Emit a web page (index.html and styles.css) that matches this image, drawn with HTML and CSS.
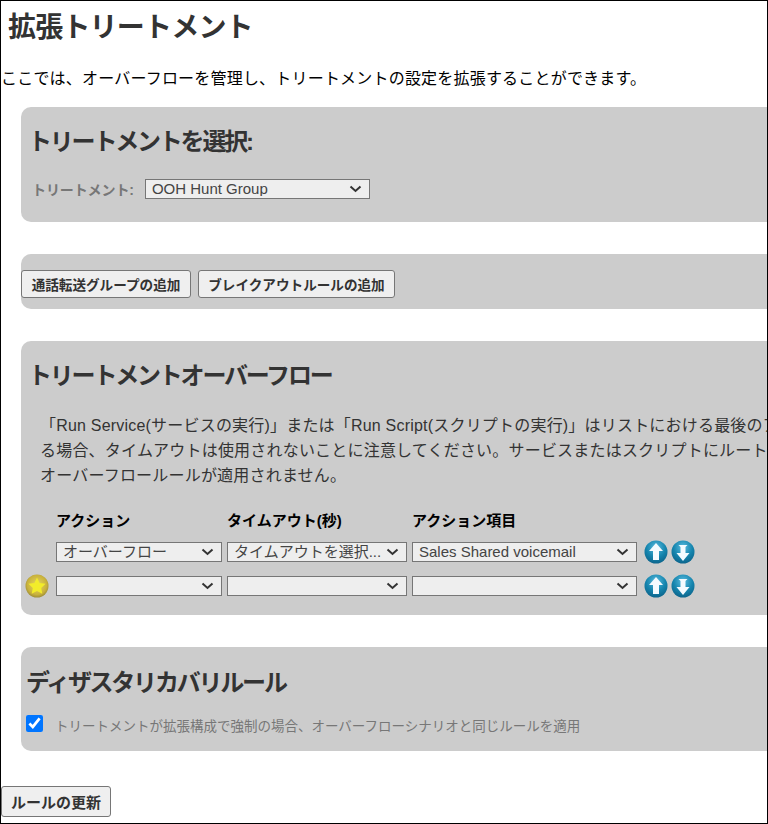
FILE: index.html
```html
<!DOCTYPE html>
<html lang="ja">
<head>
    <meta charset="UTF-8">
    <meta name="viewport" content="width=device-width, initial-scale=1.0">
    <title>拡張トリートメント</title>
    <link rel="stylesheet" href="styles.css">
</head>
<body>
    <svg class="icon-defs" width="0" height="0" aria-hidden="true">
        <defs>
            <radialGradient id="blueBall" cx="50%" cy="30%" r="75%">
                <stop offset="0" stop-color="#5cbcdf"/>
                <stop offset="0.55" stop-color="#1585ae"/>
                <stop offset="1" stop-color="#0b5f86"/>
            </radialGradient>
            <radialGradient id="goldBall" cx="50%" cy="45%" r="60%">
                <stop offset="0" stop-color="#e8d860"/>
                <stop offset="0.7" stop-color="#c9b23c"/>
                <stop offset="1" stop-color="#8f8236"/>
            </radialGradient>
            <symbol id="arrowUp" viewBox="0 0 24 24">
                <circle cx="12" cy="12" r="11.5" fill="url(#blueBall)"/>
                <path d="M12 3 L19 11 H15 V20 H9 V11 H5 Z" fill="#f4fbff"/>
            </symbol>
            <symbol id="arrowDown" viewBox="0 0 24 24">
                <circle cx="12" cy="12" r="11.5" fill="url(#blueBall)"/>
                <path d="M7.5 5 H16.5 L14.5 7 V13 H18.5 L12 21 L5.5 13 H9.5 V7 Z" fill="#f4fbff"/>
            </symbol>
        </defs>
    </svg>

    <h1 class="page-title">拡張トリートメント</h1>
    <p class="intro">ここでは、オーバーフローを管理し、トリートメントの設定を拡張することができます。</p>

    <!-- Treatment select -->
    <section class="panel panel-select">
        <h2 class="panel-title">トリートメントを選択:</h2>
        <div class="field-row">
            <label class="field-label" for="treatment">トリートメント:</label>
            <select class="select select-treatment" id="treatment">
                <option>OOH Hunt Group</option>
            </select>
        </div>
    </section>

    <!-- Add buttons -->
    <section class="panel panel-buttons">
        <button class="button button-group">通話転送グループの追加</button>
        <button class="button button-breakout">ブレイクアウトルールの追加</button>
    </section>

    <!-- Overflow rules -->
    <section class="panel panel-overflow">
        <h2 class="panel-title">トリートメントオーバーフロー</h2>
        <p class="note">「Run Service(サービスの実行)」または「Run Script(スクリプトの実行)」はリストにおける最後のアクションである必要があ<br>る場合、タイムアウトは使用されないことに注意してください。サービスまたはスクリプトにルートされた場合、それ以降の<br>オーバーフロールールが適用されません。</p>
        <div class="rule-grid">
            <span></span>
            <b class="rule-head">アクション</b>
            <b class="rule-head">タイムアウト(秒)</b>
            <b class="rule-head">アクション項目</b>
            <span></span>

            <span></span>
            <select class="select"><option>オーバーフロー</option></select>
            <select class="select"><option>タイムアウトを選択...</option></select>
            <select class="select"><option>Sales Shared voicemail</option></select>
            <div class="move-icons">
                <svg class="move-icon"><use href="#arrowUp"/></svg>
                <svg class="move-icon"><use href="#arrowDown"/></svg>
            </div>

            <svg class="star-icon" viewBox="0 0 24 24">
                <circle cx="12" cy="12" r="11.5" fill="url(#goldBall)"/>
                <path d="M12 3.5 L14.6 9 L20.6 9.7 L16.2 13.9 L17.3 19.8 L12 16.9 L6.7 19.8 L7.8 13.9 L3.4 9.7 L9.4 9 Z" fill="#f2ec2a"/>
            </svg>
            <select class="select"><option></option></select>
            <select class="select"><option></option></select>
            <select class="select"><option></option></select>
            <div class="move-icons">
                <svg class="move-icon"><use href="#arrowUp"/></svg>
                <svg class="move-icon"><use href="#arrowDown"/></svg>
            </div>
        </div>
    </section>

    <!-- Disaster recovery -->
    <section class="panel panel-recovery">
        <h2 class="panel-title">ディザスタリカバリルール</h2>
        <div class="check-row">
            <input class="check" type="checkbox" id="applySame" checked>
            <label class="check-label" for="applySame">トリートメントが拡張構成で強制の場合、オーバーフローシナリオと同じルールを適用</label>
        </div>
    </section>

    <button class="button button-update">ルールの更新</button>
</body>
</html>
```

FILE: styles.css
```css
html {
    height: 100%;
}

body {
    margin: 0;
    height: 824px;
    box-sizing: border-box;
    border: 1px solid #000;
    overflow: hidden;
    background-color: #fff;
    color: #000;
    font-family: 'Liberation Sans', 'Noto Sans CJK JP', sans-serif;
    font-size: 16px;
}

.icon-defs {
    position: absolute;
}

.page-title {
    margin: 8px 0 0 7px;
    font-size: 28px;
    line-height: 38px;
    font-weight: bold;
    letter-spacing: -0.8px;
    color: #333;
}

.intro {
    margin: 22px 0 0 0;
    line-height: 20px;
    letter-spacing: 0.2px;
}

/* Grey panels run off the right edge */
.panel {
    width: 900px;
    margin: 32px 0 0 20px;
    background-color: #ccc;
    border-radius: 10px;
}

.panel-select {
    height: 115px;
    margin-top: 18px;
    padding: 18px 0 0 7px;
    box-sizing: border-box;
}

.panel-title {
    margin: 0;
    font-size: 24px;
    line-height: 34px;
    font-weight: bold;
    letter-spacing: -2.2px;
    color: #333;
}

.field-row {
    display: flex;
    align-items: center;
    gap: 11px;
    margin-top: 20px;
    padding-left: 4px;
}

.field-label {
    font-size: 14px;
    font-weight: bold;
    letter-spacing: -0.1px;
    color: #777;
}

.select {
    height: 20px;
    box-sizing: border-box;
    padding: 0 24px 2px 6px;
    border: 1px solid #767676;
    border-radius: 0;
    appearance: none;
    background: #eee url("data:image/svg+xml,%3Csvg xmlns='http://www.w3.org/2000/svg' width='13' height='8'%3E%3Cpath d='M1.5 1.5 L6.5 6 L11.5 1.5' fill='none' stroke='%23333' stroke-width='2'/%3E%3C/svg%3E") no-repeat right 7px center;
    color: #444;
    font-family: inherit;
    font-size: 15px;
}

.select-treatment {
    width: 225px;
}

.panel-buttons {
    height: 55px;
    display: flex;
    gap: 7px;
    padding-top: 16px;
    box-sizing: border-box;
}

.button {
    height: 28px;
    padding: 0;
    border: 1px solid #767676;
    border-radius: 3px;
    background-color: #efefef;
    color: #333;
    font-family: inherit;
    font-size: 13.6px;
    font-weight: bold;
}

.button-group {
    width: 170px;
}

.button-breakout {
    width: 197px;
}

.panel-overflow {
    height: 274px;
    padding: 18px 0 0 7px;
    box-sizing: border-box;
}

.note {
    margin: 20px 0 0 12px;
    font-size: 16px;
    line-height: 25px;
    letter-spacing: 0.2px;
    color: #333;
    white-space: nowrap;
}

.rule-grid {
    display: grid;
    grid-template-columns: 26px 166px 180px 225px auto;
    column-gap: 5px;
    row-gap: 10px;
    align-items: center;
    justify-content: start;
    margin: 24px 0 0 -3px;
}

.rule-head {
    font-size: 15px;
    line-height: 18px;
    color: #000;
}

.move-icons {
    display: flex;
    gap: 3px;
    padding-left: 2px;
}

.move-icon {
    width: 24px;
    height: 24px;
}

.star-icon {
    width: 24px;
    height: 24px;
}

.panel-recovery {
    height: 104px;
    padding: 19px 0 0 5px;
    box-sizing: border-box;
}

.check-row {
    display: flex;
    align-items: flex-start;
    gap: 12px;
    margin-top: 15px;
}

.check {
    width: 17px;
    height: 17px;
    margin: 0;
    accent-color: #0075ff;
}

.check-label {
    margin-top: 2px;
    font-size: 13.5px;
    line-height: 20px;
    color: #777;
}

.button-update {
    display: block;
    width: 110px;
    height: 31px;
    margin-top: 35px;
    font-size: 15px;
}
```
